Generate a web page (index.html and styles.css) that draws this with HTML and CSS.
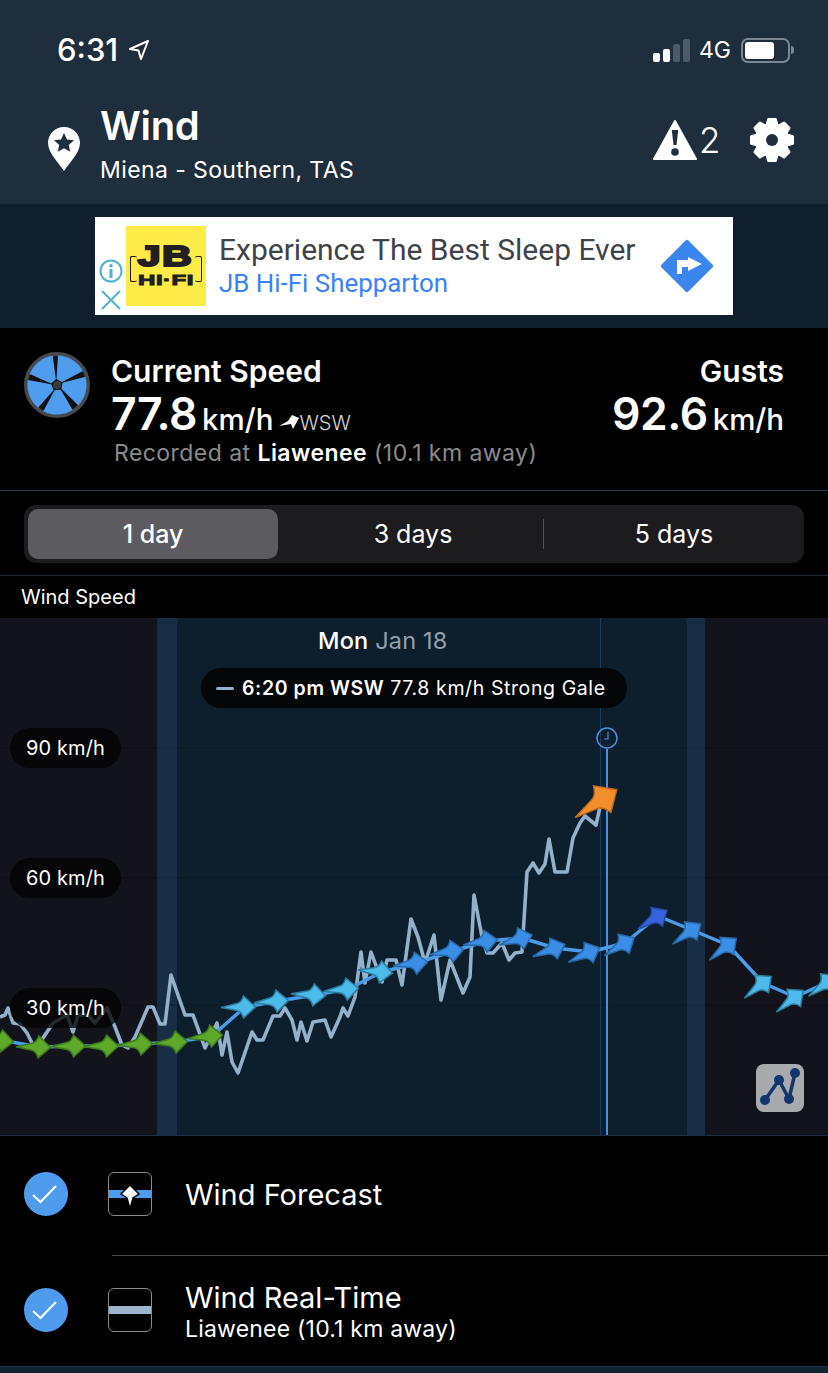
FILE: index.html
```html
<!DOCTYPE html>
<html lang="en">
<head>
<meta charset="utf-8">
<title>Wind</title>
<link rel="stylesheet" href="styles.css">
</head>
<body>
<div class="app">
  <header class="top">
    <div class="status">
      <div class="status-left">
        <span class="time">6:31</span>
        <svg class="loc" width="22" height="22" viewBox="0 0 22 22"><path d="M20 2 2 10l8.5 1.5L13 20z" fill="none" stroke="#fff" stroke-width="2" stroke-linejoin="round"/></svg>
      </div>
      <div class="status-right">
        <div class="bars"><i class="b1"></i><i class="b2"></i><i class="b3"></i><i class="b4"></i></div>
        <span class="net">4G</span>
        <div class="battery"><div class="charge"></div></div>
        <div class="nub"></div>
      </div>
    </div>
    <div class="title-row">
      <svg class="pin" width="32" height="44" viewBox="0 0 32 44"><path d="M16 0C7 0 0 7 0 16c0 10 11 20 16 28 5-8 16-18 16-28C32 7 25 0 16 0z" fill="#fff"/><path d="m16 6 3 6.4 7 .8-5.2 4.7 1.4 6.9-6.2-3.5-6.200 3.500 1.400-6.900L6 13.200l7-.8z" fill="#1f2e3c"/></svg>
      <div class="titles">
        <h1>Wind</h1>
        <p>Miena - Southern, TAS</p>
      </div>
      <div class="actions">
        <svg width="44" height="40" viewBox="0 0 44 40"><path d="M22 1 43 39H1z" fill="#fff" stroke="#fff" stroke-width="2" stroke-linejoin="round"/><path d="M18.800 10h6.400l-1.700 15h-3z" fill="#1f2e3c"/><circle cx="22" cy="32" r="3.800" fill="#1f2e3c"/></svg>
        <span class="alert-count">2</span>
        <svg class="gear" width="44" height="44" viewBox="0 0 44 44"><g fill="#fff"><circle cx="22" cy="22" r="17"/><path d="M17 1.500Q17 0 18.500 0h7Q27 0 27 1.500L29 9H15z"/><path d="M17 1.500Q17 0 18.500 0h7Q27 0 27 1.500L29 9H15z" transform="rotate(45 22 22)"/><path d="M17 1.500Q17 0 18.500 0h7Q27 0 27 1.500L29 9H15z" transform="rotate(90 22 22)"/><path d="M17 1.500Q17 0 18.500 0h7Q27 0 27 1.500L29 9H15z" transform="rotate(135 22 22)"/><path d="M17 1.500Q17 0 18.500 0h7Q27 0 27 1.500L29 9H15z" transform="rotate(180 22 22)"/><path d="M17 1.500Q17 0 18.500 0h7Q27 0 27 1.500L29 9H15z" transform="rotate(225 22 22)"/><path d="M17 1.500Q17 0 18.500 0h7Q27 0 27 1.500L29 9H15z" transform="rotate(270 22 22)"/><path d="M17 1.500Q17 0 18.500 0h7Q27 0 27 1.500L29 9H15z" transform="rotate(315 22 22)"/></g><circle cx="22" cy="22" r="6" fill="#1f2e3c"/></svg>
      </div>
    </div>
  </header>

  <section class="ad-band">
    <div class="ad">
      <div class="ad-marks">
        <svg width="24" height="24" viewBox="0 0 24 24"><circle cx="12" cy="12" r="10.500" fill="none" stroke="#4db3d1" stroke-width="2"/><rect x="10.500" y="10" width="3" height="9" fill="#4db3d1"/><circle cx="12" cy="6.800" r="1.800" fill="#4db3d1"/></svg>
        <svg width="20" height="20" viewBox="0 0 20 20"><path d="M1 1l18 18M19 1 1 19" stroke="#4db3d1" stroke-width="2"/></svg>
      </div>
      <div class="jb">
        <span class="jb-big">JB</span>
        <span class="jb-small">HI·FI</span>
      </div>
      <div class="ad-text">
        <div class="ad-head">Experience The Best Sleep Ever</div>
        <div class="ad-sub">JB Hi-Fi Shepparton</div>
      </div>
      <svg class="ad-go" width="54" height="54" viewBox="0 0 54 54"><rect x="8" y="8" width="38" height="38" rx="2" transform="rotate(45 27 27)" fill="#3b86ec"/><path d="M17 35V21h11v-3l14 7-14 7v-4h-6v7z" fill="#fff"/></svg>
    </div>
  </section>

  <section class="current">
    <svg class="wheel" width="66" height="66" viewBox="-33 -33 66 66">
      <circle r="31" fill="#111" stroke="#48494b" stroke-width="4"/>
      <g fill="#4f9def">
        <path d="M-.5-6 1-29.500A29.500 29.500 0 0 1 26-14L5-3z"/>
        <path d="M-.5-6 1-29.500A29.500 29.500 0 0 1 26-14L5-3z" transform="rotate(72)"/>
        <path d="M-.5-6 1-29.500A29.500 29.500 0 0 1 26-14L5-3z" transform="rotate(146)"/>
        <path d="M-.5-6 1-29.500A29.500 29.500 0 0 1 26-14L5-3z" transform="rotate(218)"/>
        <path d="M-.5-6 1-29.500A29.500 29.500 0 0 1 26-14L5-3z" transform="rotate(290)"/>
      </g>
      <circle r="4" fill="#3a3a3c"/>
    </svg>
    <div class="cur-main">
      <div class="cur-label">Current Speed</div>
      <div class="cur-value"><span class="big">77.8</span><span class="unit">km/h</span><svg class="dir" width="20" height="14" viewBox="0 0 20 14"><path d="M0 11 9 6 13 0l7 3-6 11-2-5z" fill="#fff"/></svg><span class="wsw">WSW</span></div>
      <div class="recorded">Recorded at <b>Liawenee</b> <span>(10.1 km away)</span></div>
    </div>
    <div class="gusts">
      <div class="cur-label">Gusts</div>
      <div class="cur-value"><span class="big">92.6</span><span class="unit">km/h</span></div>
    </div>
  </section>

  <nav class="range">
    <div class="seg">
      <div class="seg-item on">1 day</div>
      <div class="seg-item">3 days</div>
      <div class="seg-item sep">5 days</div>
    </div>
  </nav>

  <div class="chart-title">Wind Speed</div>

  <section class="chart">
    <svg class="plot" width="828" height="517" viewBox="0 618 828 517">
      <defs>
        <path id="a" d="M-24 .5-8-3.500Q-3.500-4.500-1.500-11L10.500 0-1.500 11Q-3.500 4.500-8 3.500Z"/>
      </defs>
      <rect x="0" y="618" width="157" height="517" fill="#12131b"/>
      <rect x="157" y="618" width="20" height="517" fill="#182e47"/>
      <rect x="177" y="618" width="510" height="517" fill="#0d1f2d"/>
      <rect x="687" y="618" width="18" height="517" fill="#182e47"/>
      <rect x="705" y="618" width="123" height="517" fill="#12131b"/>
      <path d="M0 748H828M0 878H828M0 1005H828" stroke="#000" stroke-opacity=".18"/>
      <path d="M600.500 618V1135" stroke="#1d3f5f"/>
      <path d="M607 749V1135" stroke="#4a90e0" stroke-width="2"/>
      <circle cx="607" cy="738" r="10" fill="none" stroke="#4a90e0" stroke-width="1.500"/>
      <path d="M608 732v7h-4" fill="none" stroke="#4a90e0" stroke-width="1.200"/>
      <polyline fill="none" stroke="#93b1cb" stroke-width="3.600" stroke-linejoin="round" points="0,1017 5,1015 8,1008 13,1023 20,1024 27,1033 32,1043 36,1050 43,1038 53,1023 67,1015 73,1032 78,1015 88,1015 95,1023 107,1008 115,1027 122,1045 128,1048 135,1037 148,1007 153,1007 160,1024 165,1024 171,975 185,1015 193,1015 205,1048 217,1023 222,1055 227,1032 232,1062 238,1073 252,1032 257,1040 263,1040 273,1016 280,1016 285,1008 292,1020 297,1040 301,1022 307,1041 313,1022 325,1020 331,1037 340,1017 343,1008 348,1016 355,997 361,952 365,983 371,952 382,982 387,960 396,960 402,985 411,919 418,937 425,963 434,935 441,1000 450,960 463,993 470,977 474,895 482,937 487,953 493,953 502,943 509,960 515,953 522,952 527,872 533,863 539,873 545,864 549,839 555,872 567,872 573,838 580,823 585,816 596,825 600,807"/>
      <polyline fill="none" stroke="#4a9be8" stroke-width="3.500" stroke-linejoin="round" points="0,1040 40,1047 75,1046 108,1046 142,1044 177,1042 212,1036 245,1007 278,1001 315,995 348,989 382,972 417,963 453,951 487,941 522,938 555,948 590,952 625,943 658,916 692,930 728,945 763,983 795,997 828,982"/>
      <g class="m-green">
        <use href="#a" transform="translate(3 1041) rotate(5)"/>
        <use href="#a" transform="translate(40 1047) rotate(2)"/>
        <use href="#a" transform="translate(75 1046)"/>
        <use href="#a" transform="translate(108 1046)"/>
        <use href="#a" transform="translate(142 1044) rotate(-2)"/>
        <use href="#a" transform="translate(177 1042) rotate(-3)"/>
        <use href="#a" transform="translate(212 1036) rotate(-5)"/>
      </g>
      <g class="m-light">
        <use href="#a" transform="translate(245 1007)"/>
        <use href="#a" transform="translate(278 1001) rotate(-3)"/>
        <use href="#a" transform="translate(315 995) rotate(4)"/>
        <use href="#a" transform="translate(348 989) rotate(-4)"/>
        <use href="#a" transform="translate(382 972) rotate(6)"/>
      </g>
      <g class="m-blue">
        <use href="#a" transform="translate(417 963) rotate(-6)"/>
        <use href="#a" transform="translate(453 951) rotate(-8)"/>
        <use href="#a" transform="translate(487 941) rotate(-8)"/>
        <use href="#a" transform="translate(522 938) rotate(-16)"/>
        <use href="#a" transform="translate(555 948) rotate(-20)"/>
        <use href="#a" transform="translate(590 952) rotate(-24)"/>
        <use href="#a" transform="translate(625 943) rotate(-30)"/>
      </g>
      <use class="m-dark" href="#a" transform="translate(658 916) rotate(-32)"/>
      <g class="m-blue">
        <use href="#a" transform="translate(692 930) rotate(-35)"/>
        <use href="#a" transform="translate(728 945) rotate(-38)"/>
      </g>
      <g class="m-light">
        <use href="#a" transform="translate(763 983) rotate(-38)"/>
        <use href="#a" transform="translate(795 997) rotate(-38)"/>
        <use href="#a" transform="translate(828 982) rotate(-35)"/>
      </g>
      <use class="m-orange" href="#a" transform="translate(604 798) rotate(-33) scale(1.450)"/>
    </svg>
    <div class="overlay">
      <div class="chart-date"><b>Mon</b> Jan 18</div>
      <div class="tip"><i class="dash"></i><b>6:20 pm WSW</b> 77.8 km/h Strong Gale</div>
      <div class="axis">
        <div class="pill">90 km/h</div>
        <div class="pill">60 km/h</div>
        <div class="pill">30 km/h</div>
      </div>
    </div>
    <div class="graph-btn">
      <svg width="40" height="40" viewBox="0 0 40 40"><polyline points="5,32 19,12 29,31 35,5" fill="none" stroke="#12356b" stroke-width="3.500"/><circle cx="5" cy="32" r="5" fill="#12356b"/><circle cx="19" cy="12" r="5" fill="#12356b"/><circle cx="29" cy="31" r="5" fill="#12356b"/><circle cx="35" cy="5" r="5" fill="#12356b"/></svg>
    </div>
  </section>

  <section class="layers">
    <div class="layer first">
      <div class="check"><svg width="44" height="44" viewBox="0 0 44 44"><path d="M9 23l7.500 7L32 14" fill="none" stroke="#fff" stroke-width="2"/></svg></div>
      <div class="swatch">
        <div class="stripe fore"></div>
        <svg class="kite" width="20" height="26" viewBox="0 0 20 26"><path d="M10 1l9 9-6 4-3 11-3-11-6-4z" fill="#fff" stroke="#000" stroke-width="1.500"/></svg>
      </div>
      <div class="layer-text"><div class="layer-name">Wind Forecast</div></div>
    </div>
    <div class="layer second">
      <div class="check"><svg width="44" height="44" viewBox="0 0 44 44"><path d="M9 23l7.500 7L32 14" fill="none" stroke="#fff" stroke-width="2"/></svg></div>
      <div class="swatch"><div class="stripe real"></div></div>
      <div class="layer-text">
        <div class="layer-name">Wind Real-Time</div>
        <div class="layer-sub">Liawenee (10.1 km away)</div>
      </div>
    </div>
  </section>
  <div class="foot"></div>
</div>
</body>
</html>
```
FILE: styles.css
```css
* { box-sizing: border-box; }
html, body { margin: 0; padding: 0; background: #000; }
body { font-family: Inter, "Liberation Sans", sans-serif; color: #fff; }
.app { width: 828px; height: 1373px; overflow: hidden; display: flex; flex-direction: column; }

.top { height: 204px; background: #1f2e3c; padding: 30px 34px 0 48px; }
.status { height: 40px; display: flex; justify-content: space-between; align-items: center; padding-left: 9px; }
.status-left { display: flex; align-items: center; gap: 10px; }
.time { font-size: 31px; font-weight: 500; line-height: 40px; }
.status-right { display: flex; align-items: center; }
.bars { display: flex; align-items: flex-end; gap: 3px; height: 23px; }
.bars i { display: block; width: 7px; border-radius: 2px; background: #fff; }
.b1 { height: 9px; } .b2 { height: 13px; }
.bars .b3 { height: 18px; background: #4d5b67; }
.bars .b4 { height: 23px; background: #4d5b67; }
.net { font-size: 23px; margin-left: 9px; margin-right: 10px; }
.battery { width: 49px; height: 25px; border: 2px solid #7b8792; border-radius: 7px; padding: 2px; }
.charge { width: 29px; height: 17px; background: #fff; border-radius: 3px; }
.nub { width: 3px; height: 8px; background: #7b8792; border-radius: 0 3px 3px 0; margin-left: 1px; }

.title-row { display: flex; align-items: center; margin-top: 30px; }
.pin { margin-top: 12px; }
.titles { margin-left: 20px; }
.titles h1 { margin: 0; font-size: 40px; font-weight: 600; line-height: 52px; letter-spacing: -.3px; }
.titles p { margin: 3px 0 0; font-size: 23px; line-height: 30px; letter-spacing: .4px; }
.actions { margin-left: auto; display: flex; align-items: center; padding-bottom: 6px; }
.alert-count { font-size: 35px; font-weight: 300; margin-left: 2px; width: 51px; }

.ad-band { height: 124px; background: #0f1f2d; padding: 13px 95px 0; }
.ad { height: 98px; background: #fff; display: flex; align-items: center; }
.ad-marks { width: 31px; height: 98px; display: flex; flex-direction: column; align-items: center; justify-content: flex-end; gap: 7px; padding-bottom: 5px; }
.jb { width: 80px; height: 80px; background: #fdec47; display: flex; flex-direction: column; align-items: center; padding-top: 20px; color: #231f20; font-family: "Liberation Sans", sans-serif; font-weight: 700; position: relative; }
.jb::before, .jb::after { content: ""; position: absolute; top: 30px; width: 6px; height: 24px; border: 1.500px solid #231f20; border-radius: 2px; }
.jb::before { left: 4px; border-right: 0; }
.jb::after { right: 4px; border-left: 0; }
.jb-big { font-size: 29px; line-height: 21px; -webkit-text-stroke: 2px #231f20; transform: scaleX(1.420); letter-spacing: 1px; }
.jb-small { font-size: 15.500px; line-height: 12px; margin-top: 7px; -webkit-text-stroke: 1px #231f20; transform: scaleX(1.550); letter-spacing: .3px; }
.ad-text { margin-left: 13px; margin-top: -2px; }
.ad-head { font-family: Roboto, sans-serif; font-size: 30px; line-height: 36px; color: #404347; white-space: nowrap; }
.ad-sub { font-family: Roboto, sans-serif; font-size: 25.900px; line-height: 30px; color: #3b82f6; white-space: nowrap; }
.ad-go { margin-left: 24px; }

.current { height: 163px; background: #000; border-bottom: 1px solid #1f3a55; display: flex; padding: 24px 44px 0 24px; }
.wheel { flex: none; }
.cur-main { margin-left: 21px; }
.cur-label { font-size: 30px; font-weight: 600; line-height: 38px; }
.cur-value { display: flex; align-items: baseline; line-height: 46px; margin-top: 1px; }
.big { font-size: 44.500px; font-weight: 600; letter-spacing: -.5px; }
.unit { font-size: 29.500px; font-weight: 500; margin-left: 5px; }
.dir { margin-left: 6px; align-self: center; margin-top: 6px; }
.wsw { font-size: 20px; font-weight: 300; color: #d8d8d8; }
.recorded { font-size: 23px; line-height: 32px; color: #8b8b8b; margin: -9px 0 0 3px; white-space: nowrap; letter-spacing: .45px; }
.recorded b { color: #fff; font-weight: 600; }
.recorded span { color: #8b8b8b; }
.gusts { margin-left: auto; text-align: right; }
.gusts .cur-value { justify-content: flex-end; }

.range { height: 85px; background: #000; padding: 14px 24px 0; border-bottom: 1px solid #1b2a38; }
.seg { height: 58px; background: #1c1c1e; border-radius: 12px; padding: 4px; display: grid; grid-template-columns: 250px 250px 1fr; gap: 10px; }
.seg-item { display: flex; align-items: center; justify-content: center; font-size: 25px; border-radius: 10px; position: relative; }
.seg-item.on { background: #5c5c60; font-weight: 500; }
.seg-item.sep::before { content: ""; position: absolute; left: -5px; top: 10px; bottom: 10px; width: 1px; background: #555; }

.chart-title { height: 42px; background: #000; padding-left: 21px; font-size: 20px; line-height: 42px; }

.chart { position: relative; height: 517px; flex: none; }
.plot { display: block; }
.m-green use { fill: #5fa82a; stroke: #3e7a1f; stroke-width: 1.500; }
.m-light use { fill: #4dbbea; stroke: #2c7d9e; stroke-width: 1.500; }
.m-blue use { fill: #3a8ee6; stroke: #2a69a8; stroke-width: 1.500; }
.m-dark { fill: #3664e0; stroke: #2a4aa0; stroke-width: 1.500; }
.m-orange { fill: #f28f2c; stroke: #c06a1a; stroke-width: 1; }
.overlay { position: absolute; inset: 0; display: flex; flex-direction: column; pointer-events: none; }
.chart-date { align-self: flex-start; margin: 9px 0 0 318px; font-size: 23.500px; line-height: 28px; color: #93a0ad; letter-spacing: .2px; }
.chart-date b { color: #fff; font-weight: 500; }
.tip { align-self: flex-start; margin: 13px 0 0 201px; height: 40px; padding: 0 21px 0 15px; background: #050608; border-radius: 20px; display: flex; align-items: center; font-size: 19.500px; letter-spacing: .6px; white-space: pre; }
.tip b { font-weight: 600; }
.dash { width: 18px; height: 3px; background: #93b1cb; border-radius: 2px; margin-right: 8px; }
.axis { margin: 20px 0 0 10px; display: flex; flex-direction: column; gap: 90px; align-items: flex-start; }
.pill { width: 111px; height: 40px; border-radius: 20px; background: rgba(2, 2, 3, .78); font-size: 20px; line-height: 40px; text-align: center; letter-spacing: .1px; }
.graph-btn { position: absolute; left: 756px; top: 446px; width: 48px; height: 48px; border-radius: 8px; background: #a9aaad; padding: 4px; }
.graph-btn svg { display: block; }

.layers { height: 231px; background: #000; border-top: 1px solid #1c2f44; padding-left: 24px; }
.layer { display: flex; align-items: center; }
.layer.first { height: 119px; padding-bottom: 3px; }
.layer.second { height: 111px; padding-bottom: 1px; position: relative; }
.layer.second::before { content: ""; position: absolute; left: 88px; right: 0; top: 0; height: 1px; background: #4a4a4c; }
.check { width: 44px; height: 44px; border-radius: 50%; background: #4f9cef; flex: none; }
.check svg { display: block; }
.swatch { width: 44px; height: 44px; margin-left: 40px; border: 1.500px solid #8a8a8a; border-radius: 6px; position: relative; display: flex; align-items: center; flex: none; }
.stripe { width: 100%; height: 8px; }
.stripe.fore { background: #4f9cef; }
.stripe.real { background: #9ab5cd; }
.kite { position: absolute; left: 10.500px; top: 11px; }
.layer-text { margin-left: 33px; }
.layer-name { font-size: 29px; line-height: 37px; }
.layer-sub { font-size: 23px; line-height: 26px; letter-spacing: .2px; }
.foot { height: 7px; background: #0f2230; border-top: 1px solid #1f3a58; flex: none; }
```
